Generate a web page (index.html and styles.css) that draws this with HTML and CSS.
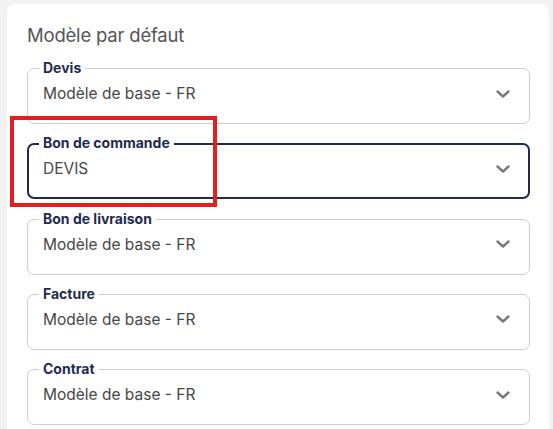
FILE: index.html
```html
<!DOCTYPE html>
<html lang="fr">
<head>
<meta charset="utf-8">
<title>Modèle par défaut</title>
<link rel="stylesheet" href="styles.css">
</head>
<body>
<div class="card">
  <h2 class="title">Modèle par défaut</h2>
  <div class="fields">
    <div class="field">
      <span class="label">Devis</span>
      <span class="value">Modèle de base - FR</span>
      <svg class="chev" viewBox="0 0 14 8" width="14" height="8"><path d="M1.5 1.5 L7 6.5 L12.5 1.5" /></svg>
    </div>
    <div class="field focused">
      <span class="label">Bon de commande</span>
      <span class="value">DEVIS</span>
      <svg class="chev" viewBox="0 0 14 8" width="14" height="8"><path d="M1.5 1.5 L7 6.5 L12.5 1.5" /></svg>
    </div>
    <div class="field">
      <span class="label">Bon de livraison</span>
      <span class="value">Modèle de base - FR</span>
      <svg class="chev" viewBox="0 0 14 8" width="14" height="8"><path d="M1.5 1.5 L7 6.5 L12.5 1.5" /></svg>
    </div>
    <div class="field">
      <span class="label">Facture</span>
      <span class="value">Modèle de base - FR</span>
      <svg class="chev" viewBox="0 0 14 8" width="14" height="8"><path d="M1.5 1.5 L7 6.5 L12.5 1.5" /></svg>
    </div>
    <div class="field">
      <span class="label">Contrat</span>
      <span class="value">Modèle de base - FR</span>
      <svg class="chev" viewBox="0 0 14 8" width="14" height="8"><path d="M1.5 1.5 L7 6.5 L12.5 1.5" /></svg>
    </div>
  </div>
</div>
<div class="highlight"></div>
</body>
</html>
```

FILE: styles.css
```css
html, body {
  margin: 0;
  padding: 0;
  background: #f2f2f2;
  font-family: Inter, "Noto Sans", sans-serif;
}

.card {
  margin: 4px 0 0 7px;
  width: 542px;
  height: 425px;
  box-sizing: border-box;
  background: #ffffff;
  border-radius: 8px 8px 0 0;
  padding: 18px 19px 0 20px;
}

.title {
  margin: 0;
  font-size: 18.5px;
  line-height: 26px;
  font-weight: 400;
  color: #555555;
  letter-spacing: -0.2px;
}

.fields {
  margin-top: 20px;
  display: flex;
  flex-direction: column;
  gap: 19.25px;
}

.field {
  position: relative;
  height: 56px;
  box-sizing: border-box;
  border: 1px solid #c9cdd3;
  border-radius: 7px;
  display: flex;
  align-items: center;
  justify-content: space-between;
  padding: 0 19px 5px 15px;
}

.field.focused {
  border: 2px solid #1f2a4c;
  padding: 0 18px 5px 14px;
}

.label {
  position: absolute;
  top: -9px;
  left: 11px;
  padding: 0 4px;
  background: #ffffff;
  font-size: 14px;
  line-height: 16px;
  font-weight: 700;
  color: #1f2b4e;
}

.field.focused .label {
  top: -10px;
  left: 10px;
}

.value {
  font-size: 15.5px;
  color: #474747;
}

.chev {
  fill: none;
  stroke: #7a7a7a;
  stroke-width: 2.4;
  stroke-linecap: round;
  stroke-linejoin: round;
}

.highlight {
  position: absolute;
  left: 10px;
  top: 116px;
  width: 207px;
  height: 91px;
  box-sizing: border-box;
  border: 4px solid #e3201f;
}
```
